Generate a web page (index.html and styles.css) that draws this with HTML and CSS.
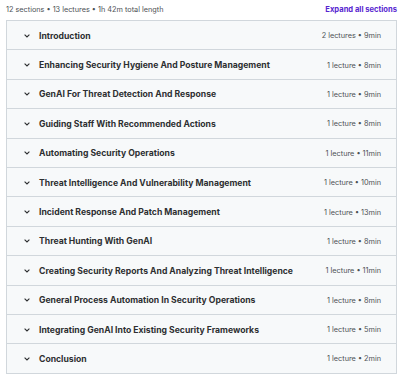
FILE: index.html
```html
<!DOCTYPE html>
<html>
<head>
<meta charset="utf-8">
<link rel="stylesheet" href="styles.css">
</head>
<body>
<div class="page">
  <div class="top">
    <span class="summary">12 sections • 13 lectures • 1h 42m total length</span>
    <span class="expand">Expand all sections</span>
  </div>
  <div class="list">
    <div class="row"><span class="chev"><svg width="6" height="4" viewBox="0 0 6 4"><path d="M0.6 0.6 L3 3 L5.4 0.6" fill="none" stroke="#2d2f31" stroke-width="1.1"/></svg></span><span class="title">Introduction</span><span class="meta">2 lectures • 9min</span></div>
    <div class="row"><span class="chev"><svg width="6" height="4" viewBox="0 0 6 4"><path d="M0.6 0.6 L3 3 L5.4 0.6" fill="none" stroke="#2d2f31" stroke-width="1.1"/></svg></span><span class="title">Enhancing Security Hygiene And Posture Management</span><span class="meta">1 lecture • 8min</span></div>
    <div class="row"><span class="chev"><svg width="6" height="4" viewBox="0 0 6 4"><path d="M0.6 0.6 L3 3 L5.4 0.6" fill="none" stroke="#2d2f31" stroke-width="1.1"/></svg></span><span class="title">GenAI For Threat Detection And Response</span><span class="meta">1 lecture • 9min</span></div>
    <div class="row"><span class="chev"><svg width="6" height="4" viewBox="0 0 6 4"><path d="M0.6 0.6 L3 3 L5.4 0.6" fill="none" stroke="#2d2f31" stroke-width="1.1"/></svg></span><span class="title">Guiding Staff With Recommended Actions</span><span class="meta">1 lecture • 8min</span></div>
    <div class="row"><span class="chev"><svg width="6" height="4" viewBox="0 0 6 4"><path d="M0.6 0.6 L3 3 L5.4 0.6" fill="none" stroke="#2d2f31" stroke-width="1.1"/></svg></span><span class="title">Automating Security Operations</span><span class="meta">1 lecture • 11min</span></div>
    <div class="row"><span class="chev"><svg width="6" height="4" viewBox="0 0 6 4"><path d="M0.6 0.6 L3 3 L5.4 0.6" fill="none" stroke="#2d2f31" stroke-width="1.1"/></svg></span><span class="title">Threat Intelligence And Vulnerability Management</span><span class="meta">1 lecture • 10min</span></div>
    <div class="row"><span class="chev"><svg width="6" height="4" viewBox="0 0 6 4"><path d="M0.6 0.6 L3 3 L5.4 0.6" fill="none" stroke="#2d2f31" stroke-width="1.1"/></svg></span><span class="title">Incident Response And Patch Management</span><span class="meta">1 lecture • 13min</span></div>
    <div class="row"><span class="chev"><svg width="6" height="4" viewBox="0 0 6 4"><path d="M0.6 0.6 L3 3 L5.4 0.6" fill="none" stroke="#2d2f31" stroke-width="1.1"/></svg></span><span class="title">Threat Hunting With GenAI</span><span class="meta">1 lecture • 8min</span></div>
    <div class="row"><span class="chev"><svg width="6" height="4" viewBox="0 0 6 4"><path d="M0.6 0.6 L3 3 L5.4 0.6" fill="none" stroke="#2d2f31" stroke-width="1.1"/></svg></span><span class="title">Creating Security Reports And Analyzing Threat Intelligence</span><span class="meta">1 lecture • 11min</span></div>
    <div class="row"><span class="chev"><svg width="6" height="4" viewBox="0 0 6 4"><path d="M0.6 0.6 L3 3 L5.4 0.6" fill="none" stroke="#2d2f31" stroke-width="1.1"/></svg></span><span class="title">General Process Automation In Security Operations</span><span class="meta">1 lecture • 8min</span></div>
    <div class="row"><span class="chev"><svg width="6" height="4" viewBox="0 0 6 4"><path d="M0.6 0.6 L3 3 L5.4 0.6" fill="none" stroke="#2d2f31" stroke-width="1.1"/></svg></span><span class="title">Integrating GenAI Into Existing Security Frameworks</span><span class="meta">1 lecture • 5min</span></div>
    <div class="row"><span class="chev"><svg width="6" height="4" viewBox="0 0 6 4"><path d="M0.6 0.6 L3 3 L5.4 0.6" fill="none" stroke="#2d2f31" stroke-width="1.1"/></svg></span><span class="title">Conclusion</span><span class="meta">1 lecture • 2min</span></div>
  </div>
</div>
</body>
</html>
```
FILE: styles.css
```css
* { box-sizing: border-box; }
html, body { margin: 0; padding: 0; background: #ffffff; }
body { font-family: Inter, "Noto Sans", sans-serif; color: #2d2f31; }
.page { width: 400px; padding: 0 3px 0 6px; }
.top { display: flex; justify-content: space-between; align-items: center; height: 20px; padding-bottom: 1px; }
.summary { font-size: 7.3px; color: #4d5155; }
.expand { font-size: 7.6px; font-weight: 700; color: #5624d0; }
.list { border: 1px solid #d1d7dc; }
.row { display: flex; align-items: center; height: 29.4px; background: #f7f9fa; border-top: 1px solid #d1d7dc; padding: 1px 15px 0 17px; }
.row:first-child { border-top: none; height: 28.4px; }
.chev { display: flex; width: 15px; }
.title { flex: 1; font-size: 8.65px; font-weight: 700; color: #2d2f31; white-space: nowrap; }
.meta { font-size: 7.3px; color: #4d5155; white-space: nowrap; }
```
